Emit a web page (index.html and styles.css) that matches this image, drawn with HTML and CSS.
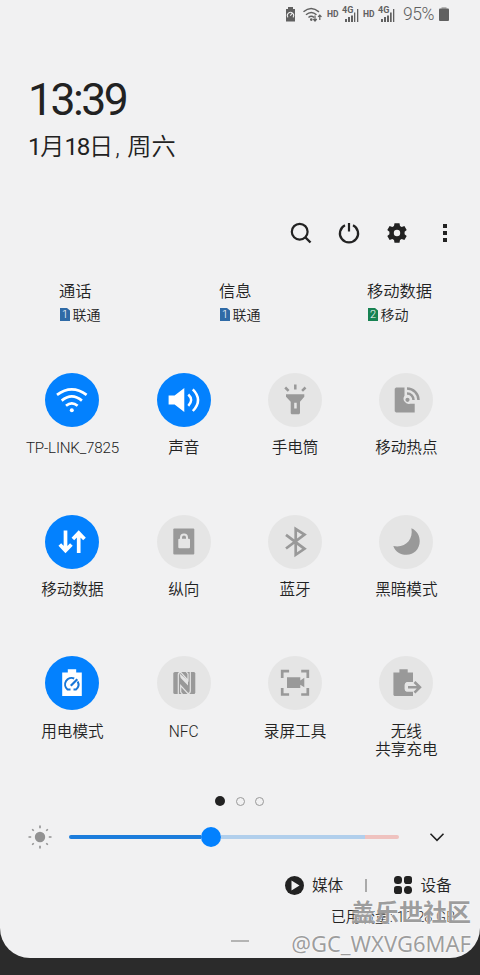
FILE: index.html
```html
<!DOCTYPE html>
<html lang="zh-CN">
<head>
<meta charset="utf-8">
<title>快捷设置</title>
<link rel="stylesheet" href="styles.css">
</head>
<body>
<main class="panel">
  <header class="status">
    <svg width="9" height="15" viewBox="0 0 9 15"><path d="M2 0h5v2h2v12.5H0V2h2z" fill="#606060"/><path d="M2 10.3a3.1 3.1 0 1 1 5 0M4.3 8.7L6.5 6" fill="none" stroke="#f1f1f2" stroke-width="1.1"/></svg>
    <svg class="st-wifi" width="19" height="15" viewBox="0 0 19 15" fill="none" stroke="#606060" stroke-width="1.5"><path d="M.5 4.800Q8 -1.800 16 4.800M3 7.800Q8.300 3.200 13.500 7.800M5.500 10.500Q8.300 8 11 10.500"/><path d="M12 8.500v5M10.300 12l1.700 2 1.700-2M16.800 13V8M15.100 9.800L16.800 8l1.700 1.800" stroke-width="1.200"/><circle cx="8.300" cy="12.600" r=".6"/></svg>
    <span class="hd">HD</span>
    <span class="net"><b>4G</b><svg width="17" height="15" viewBox="0 0 17 15" fill="#606060"><path d="M3 12h2v3H3zM6 10h2v5H6zM9 8.500h2V15H9zM12 5.500h1.300V15H12zM15 2h1.300v13H15z"/></svg></span>
    <span class="hd hd2">HD</span>
    <span class="net"><b>4G</b><svg width="17" height="15" viewBox="0 0 17 15" fill="#606060"><path d="M3 12h2v3H3zM6 10h2v5H6zM9 8.500h2V15H9zM12 5.500h1.700V15H12zM15 2h1.300v13H15z"/></svg></span>
    <span class="pct">95%</span>
    <svg width="10" height="14" viewBox="0 0 10 14"><path d="M2.500 0h5v2h-5z" fill="#b5b5b5"/><rect y="1.500" width="10" height="12.500" rx="1" fill="#606060"/></svg>
  </header>

  <section class="clock">
    <div class="time">13:39</div>
    <div class="date"><span class="dn">1</span>月<span class="dn">18</span>日<span class="comma">,</span>周六</div>
  </section>

  <nav class="actions">
    <svg width="24" height="24" viewBox="0 0 24 24" fill="none" stroke="#222"><circle cx="10.700" cy="10.700" r="7.900" stroke-width="2.200"/><path d="M16 16l5.500 5.500" stroke-width="2.400"/></svg>
    <svg width="24" height="24" viewBox="0 0 24 24" fill="none" stroke="#222" stroke-width="2.200"><path d="M12 2v8.500M8 4.200a9.100 9.100 0 1 0 8 0"/></svg>
    <svg width="24" height="24" viewBox="0 0 24 24"><path fill="#222" fill-rule="evenodd" d="M9.500 2.200h5l.5 2.700 1.700 1 2.700-1 2.300 4.100-2.100 1.800v2.400l2.100 1.800-2.300 4.100-2.700-1-1.700 1-.5 2.700h-5L9 19.100l-1.700-1-2.700 1L2.300 15l2.100-1.800v-2.400L2.300 9l2.300-4.100 2.700 1 1.700-1zM12 8.800a3.200 3.200 0 1 0 0 6.400a3.200 3.200 0 0 0 0-6.400z"/></svg>
    <svg width="24" height="24" viewBox="0 0 24 24" fill="#222"><path d="M10 3h4v4h-4zM10 10h4v4h-4zM10 17h4v4h-4z"/></svg>
  </nav>

  <section class="sims">
    <div class="sim"><h2>通话</h2><p><i class="card">1</i>联通</p></div>
    <div class="sim"><h2>信息</h2><p><i class="card">1</i>联通</p></div>
    <div class="sim"><h2>移动数据</h2><p><i class="card green">2</i>移动</p></div>
  </section>

  <section class="tiles">
    <div class="tile on"><svg viewBox="0 0 54 54" fill="none" stroke="#fff" stroke-width="2.700"><path d="M12 21.800Q26.800 10.800 41.600 21.800M16.700 27.600Q26.800 19.200 36.900 27.600M21 32.800Q26.800 27.900 32.600 32.800"/><circle cx="26.800" cy="37.300" r="2" fill="#fff" stroke="none"/></svg><span class="wifi">TP-LINK_7825</span></div>
    <div class="tile on"><svg viewBox="0 0 54 54"><path fill="#fff" d="M11.600 22.500h6l9.700-7.500v24l-9.700-7.500h-6z"/><path fill="none" stroke="#fff" stroke-width="2.500" d="M31.300 21.500q5.700 5.500 0 11.300M35.800 16.300q10.500 10.700 0 21.700"/></svg><span>声音</span></div>
    <div class="tile"><svg viewBox="0 0 54 54"><path fill="#999" fill-rule="evenodd" d="M18 21.200h18.300v2.500l-4.300 5v11.500l-1 1h-7.500l-.8-1V28.700l-4.700-5zM26.200 29.800v5.700h2.500v-5.700z"/><path stroke="#999" stroke-width="2.500" d="M27.300 11.500v5M17.200 14.500l3.400 3.400M37.500 14.500l-3.400 3.400"/></svg><span>手电筒</span></div>
    <div class="tile"><svg viewBox="0 0 54 54"><path fill="#999" d="M17 14.500h8.500v8.200a5.200 5.200 0 0 0 5.500 8h4.700v8.800H17l-1.300-1.300V15.800z"/><circle cx="28.500" cy="26.800" r="2.100" fill="#999"/><path fill="none" stroke="#999" stroke-width="2.500" d="M28 20.500a6.300 6.300 0 0 1 6.500 6.500M28 15.500a11.500 11.500 0 0 1 11.500 11.500"/></svg><span>移动热点</span></div>

    <div class="tile on"><svg viewBox="0 0 54 54" fill="none" stroke="#fff" stroke-width="3.700"><path d="M20.500 15.500V36M14.800 29.500l5.700 6 5.900-6M33.700 38V18M27.900 24l5.800-6 5.800 6"/></svg><span>移动数据</span></div>
    <div class="tile"><svg viewBox="0 0 54 54"><rect x="16.300" y="13.500" width="21" height="26" rx="1" fill="#999"/><rect x="21.300" y="23.700" width="11.700" height="9.500" rx="1" fill="#e5e5e5"/><path fill="none" stroke="#e5e5e5" stroke-width="2" d="M24 24.500v-2a3 3 0 0 1 6 0v2"/></svg><span>纵向</span></div>
    <div class="tile"><svg viewBox="0 0 54 54" fill="none" stroke="#999" stroke-width="2.700"><path d="M18 19.800l18.500 14-8.800 6V14l8.800 5.500L18 33.500"/></svg><span>蓝牙</span></div>
    <div class="tile"><svg viewBox="0 0 54 54"><path fill="#999" d="M32.400 13.300C38.500 16 40.700 21 40.700 26.300C40.700 34 35 39.800 27.500 39.800C21 39.800 16.200 36.500 14.300 31C26 33.500 34.500 25 32.400 13.300z"/></svg><span>黑暗模式</span></div>

    <div class="tile on"><svg viewBox="0 0 54 54"><path fill="#fff" d="M22.800 13.200h8.400v3.300h5.600V40H17.200V16.500h5.600z"/><path fill="none" stroke="#1777d8" stroke-width="2" d="M25.500 33.500h-3a6.500 6.500 0 0 1 6.700-11M32.700 25.500a6.500 6.500 0 0 1-1.700 8h-2.500"/><path stroke="#1777d8" stroke-width="2.200" d="M25.800 29.800l6.500-6.500"/></svg><span>用电模式</span></div>
    <div class="tile"><svg viewBox="0 0 54 54"><rect x="16.300" y="16" width="22" height="22" rx="1.500" fill="#999"/><path d="M21.300 38V18.500q0-2 2.500-2.200L31 24.500V18l-2-2.500M33.300 15.500V35q0 2.500-2.500 2.500L23.700 29.500V36l2 2.500" fill="none" stroke="#e5e5e5" stroke-width="1.200"/><path d="M22.500 17.500l8.500 7v5l-7.300-7.500z" fill="#e5e5e5"/></svg><span>NFC</span></div>
    <div class="tile"><svg viewBox="0 0 54 54"><path fill="none" stroke="#999" stroke-width="2.700" d="M14.200 22v-6.800h6.900M33.200 15.200h6.600V22M39.800 32v6.500h-6.600M21.100 38.500h-6.900V32"/><path fill="#999" d="M19 21.300h13.300v3.200l4-2.700v9.500l-4-2.600v3.300H19z"/></svg><span>录屏工具</span></div>
    <div class="tile"><svg viewBox="0 0 54 54"><path fill="#999" d="M20.400 13.200h8.300v3.300H34v9.500h-6.400q-2 1.100-2 3v4q0 2 2 2.800H34V40H15.400l-1-1V16.500h6z"/><path fill="none" stroke="#999" stroke-width="2.600" d="M29 31.300h11.500M35.500 26l5.400 5.300-5.400 5.300"/></svg><span>无线<br>共享充电</span></div>
  </section>

  <div class="pages"><i class="current"></i><i></i><i></i></div>

  <section class="brightness">
    <svg class="sun" width="24" height="24" viewBox="0 0 24 24"><circle cx="12" cy="12" r="5.200" fill="#929292"/><path d="M12 .5v2.700M12 20.800v2.700M.5 12h2.700M20.800 12h2.700M4.200 4.200l1.500 1.500M18.300 18.300l1.500 1.500M4.200 19.800l1.500-1.500M18.300 5.700l1.500-1.500" stroke="#929292" stroke-width="1.600"/></svg>
    <div class="track"><div class="filled"></div><div class="knob"></div><div class="rest"></div><div class="hot"></div></div>
    <svg class="chev" width="16" height="12" viewBox="0 0 16 12"><path d="M1.500 2.800L8 9.300l6.500-6.500" fill="none" stroke="#222" stroke-width="1.600"/></svg>
  </section>

  <footer class="footer">
    <svg width="19" height="19" viewBox="0 0 19 19"><circle cx="9.500" cy="9.500" r="9.500" fill="#222"/><path fill="#f1f1f2" d="M6.500 4.500v10l8-5z"/></svg>
    <span class="media">媒体</span>
    <i class="sep"></i>
    <svg width="18" height="18" viewBox="0 0 18 18" fill="#222"><rect width="8" height="8" rx="3.500"/><rect x="10" width="8" height="8" rx="2.800"/><rect y="10" width="8" height="8" rx="2.800"/><rect x="10" y="10" width="8" height="8" rx="3.800"/></svg>
    <span class="devices">设备</span>
  </footer>
  <div class="usage">已用流量: 12.28 GB</div>
  <div class="handle"></div>
</main>
<div class="mark"><div class="community">盖乐世社区</div><div class="author">@GC_WXVG6MAF</div></div>
</body>
</html>
```
FILE: styles.css
```css
* { box-sizing: border-box; }
body {
  margin: 0;
  width: 480px;
  height: 975px;
  overflow: hidden;
  position: relative;
  background: #2b2b2b;
  color: #222;
  font-family: Roboto, "Noto Sans CJK SC", sans-serif;
  font-weight: 350;
}
svg { display: block; flex: none; }
i { font-style: normal; }
.panel {
  height: 958px;
  background: #f1f1f2;
  border-radius: 0 0 30px 30px;
  overflow: hidden;
}
.status {
  height: 28px;
  padding-left: 286px;
  display: flex;
  align-items: center;
  color: #606060;
}
.st-wifi { margin-left: 8px; }
.hd { width: 13px; margin-left: 5px; font-size: 8.5px; font-weight: 700; line-height: 12px; }
.hd2 { margin-left: 4px; }
.net { position: relative; width: 17px; height: 15px; margin-left: 2px; }
.net b { position: absolute; left: 0; top: -1px; font-size: 9px; line-height: 9px; }
.pct { width: 32px; margin: 0 4px 0 8px; font-size: 17.5px; line-height: 20px; letter-spacing: -.5px; white-space: nowrap; }
.clock { height: 180px; padding: 47px 0 0 28px; }
.time { height: 50px; font-size: 44.5px; line-height: 50px; letter-spacing: -2.5px; font-weight: 400; }
.date { height: 36px; margin: 4px 0 0; font-size: 24.2px; line-height: 36px; white-space: nowrap; }
.dn { letter-spacing: -1.3px; font-weight: 400; }
.comma { display: inline-block; width: 14px; padding-left: 2px; }
.actions { height: 50px; padding-left: 289px; display: flex; gap: 24px; align-items: center; }
.sims { height: 115px; padding-top: 22px; display: grid; grid-template-columns: 160px 148px 1fr; padding-left: 59px; }
.sim h2 { margin: 0; font-size: 16.3px; line-height: 24px; font-weight: 350; }
.sim p { margin: 0; display: flex; align-items: center; font-size: 14px; line-height: 22px; }
.card {
  width: 10px;
  height: 13px;
  margin: 0 2.5px 1px 1px;
  background: #2f6aa6;
  color: #fff;
  font-size: 11px;
  line-height: 13px;
  text-align: center;
  clip-path: polygon(0 0, 70% 0, 100% 20%, 100% 100%, 0 100%);
}
.green { background: #178252; }
.tiles {
  height: 421px;
  padding: 0 18px 0 16.8px;
  display: grid;
  grid-template-columns: repeat(4, 1fr);
  grid-template-rows: 142px 141.5px 137px;
}
.tile { text-align: center; font-size: 15.6px; line-height: 18px; white-space: nowrap; }
.tile svg { width: 54px; height: 54px; margin: -.5px auto 12.5px; border-radius: 50%; background: #e5e5e5; }
.tile.on svg { background: #0381fe; }
.tile span { display: block; }
.tile .wifi { letter-spacing: -.2px; font-size: 15.2px; }
.pages { height: 14px; display: flex; justify-content: center; align-items: center; gap: 10.5px; padding-right: 1px; }
.pages i { width: 9px; height: 9px; border: 1.5px solid #999; border-radius: 50%; }
.pages .current { width: 10px; height: 10px; border: 0; background: #222; }
.brightness { height: 58px; padding: 0 35px 0 28px; display: flex; align-items: center; }
.track { width: 330px; margin: 0 30px 0 17px; display: flex; align-items: center; }
.filled { width: 132.3px; height: 4px; border-radius: 2px 0 0 2px; background: #1c7ddc; }
.knob { width: 20px; height: 20px; border-radius: 50%; background: #0381fe; }
.rest { width: 143.7px; height: 4px; background: #b1cfec; }
.hot { width: 34px; height: 4px; background: #efc2bf; border-radius: 0 2px 2px 0; }
.footer { height: 38px; padding-left: 285px; display: flex; align-items: center; font-size: 15.6px; line-height: 20px; }
.media { width: 32px; margin-left: 8px; padding-top: 1px; }
.sep { width: 1.5px; height: 13px; background: #aaa; margin: 0 27px 0 21px; }
.devices { margin-left: 9px; padding-top: 1px; }
.usage { height: 24px; padding: 1px 0 0 331px; font-size: 14.7px; line-height: 24px; white-space: nowrap; }
.handle { width: 18px; height: 2px; margin: 12px 0 0 231px; background: #b4b4b4; }
.mark {
  position: absolute;
  right: 9px;
  top: 898px;
  width: 180px;
  text-align: right;
  color: rgba(125, 125, 125, .75);
  text-shadow: 0 0 2px #fff, 0 0 1px #fff;
  font-weight: 400;
  white-space: nowrap;
}
.community { font-size: 24px; line-height: 30px; font-weight: 700; }
.author { font-family: "Noto Sans", sans-serif; font-size: 22px; line-height: 31px; }
```
